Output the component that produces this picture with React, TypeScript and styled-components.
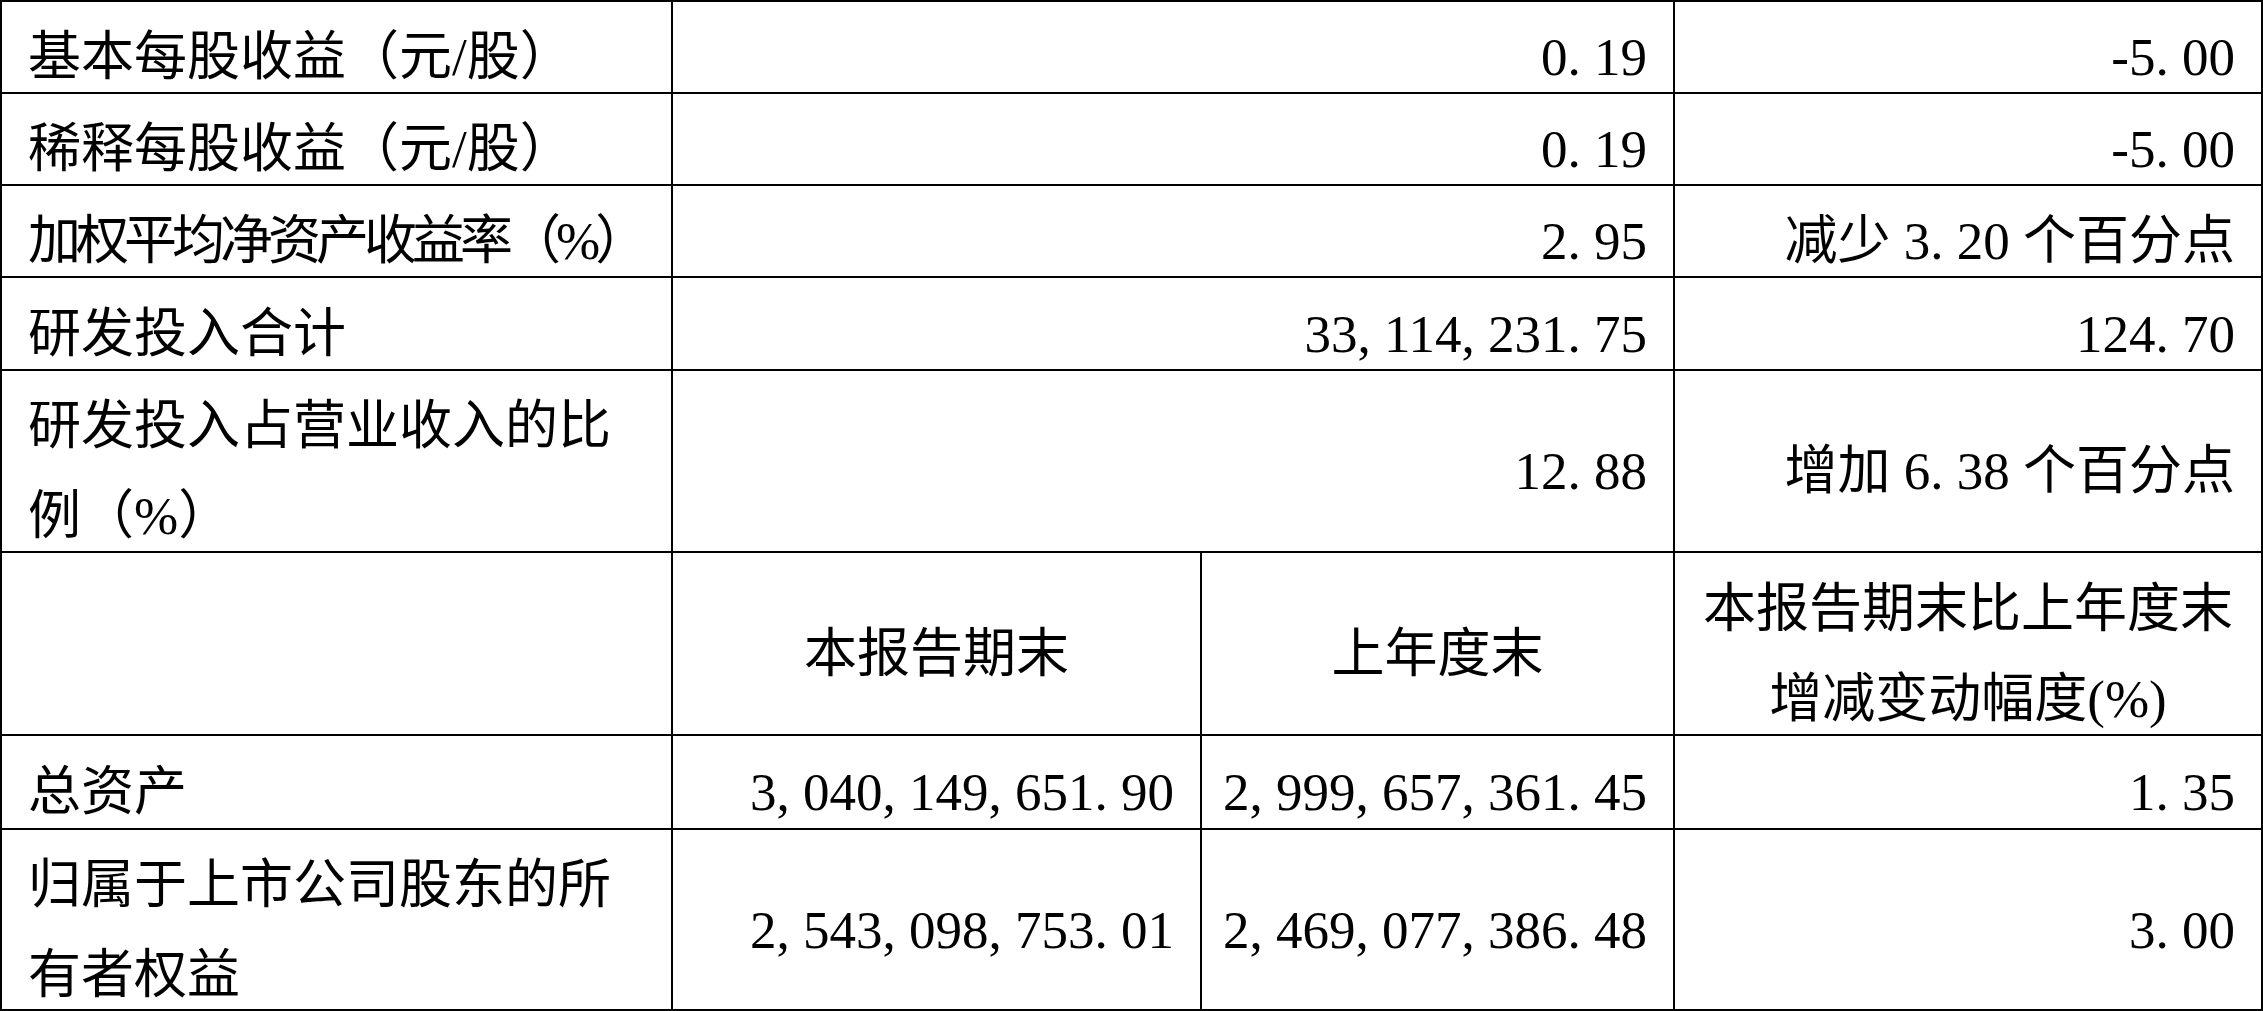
import React from 'react';
import styled, { createGlobalStyle } from 'styled-components';

const GlobalStyle = createGlobalStyle`
  html, body {
    margin: 0;
    padding: 0;
    background: #fff;
  }
  body {
    font-family: "Liberation Serif", "Noto Sans CJK SC", serif;
  }
`;

const Table = styled.div`
  display: grid;
  grid-template-columns: 669px 527px 471px 586px;
  grid-template-rows: 90px 90px 90px 91px 180px 181px 92px 179px;
  gap: 2px;
  padding: 2px;
  width: 2263px;
  box-sizing: border-box;
  background: #000;
  color: #000;
  font-family: "Liberation Serif", "Noto Sans CJK SC", serif;
  font-size: 53px;
  line-height: 90px;
`;

type Align = 'left' | 'center' | 'right';

const justify: Record<Align, string> = {
  left: 'flex-start',
  center: 'center',
  right: 'flex-end',
};

const CellBox = styled.div<{ $align: Align; $span: number; $tight: boolean }>`
  background: #fff;
  display: flex;
  align-items: center;
  justify-content: ${(p) => justify[p.$align]};
  text-align: ${(p) => p.$align};
  grid-column: span ${(p) => p.$span};
  padding: 20px ${(p) => (p.$align === 'center' ? '20px' : '26px')} 0;
  box-sizing: border-box;
  min-width: 0;
  letter-spacing: ${(p) => (p.$tight ? '-5px' : 'normal')};
  white-space: ${(p) => (p.$tight ? 'nowrap' : 'normal')};
`;

const Content = styled.div`
  text-align: inherit;
`;

// half-width punctuation in the source font takes a full digit cell
const Punct = styled.span`
  margin-right: 0.25em;
`;

const num = (s: string) =>
  s.split(/([,.])/).map((part, i) =>
    part === ',' || part === '.' ? <Punct key={i}>{part}</Punct> : part
  );

const Cell = ({
  align = 'left',
  span = 1,
  tight = false,
  children,
}: {
  align?: Align;
  span?: number;
  tight?: boolean;
  children?: React.ReactNode;
}) => (
  <CellBox $align={align} $span={span} $tight={tight}>
    <Content>{children}</Content>
  </CellBox>
);

export default function App() {
  return (
    <>
      <GlobalStyle />
      <Table>
        <Cell>基本每股收益（元/股）</Cell>
        <Cell align="right" span={2}>{num('0.19')}</Cell>
        <Cell align="right">{num('-5.00')}</Cell>

        <Cell>稀释每股收益（元/股）</Cell>
        <Cell align="right" span={2}>{num('0.19')}</Cell>
        <Cell align="right">{num('-5.00')}</Cell>

        <Cell tight>加权平均净资产收益率（%）</Cell>
        <Cell align="right" span={2}>{num('2.95')}</Cell>
        <Cell align="right">
          减少 {num('3.20')} 个百分点
        </Cell>

        <Cell>研发投入合计</Cell>
        <Cell align="right" span={2}>{num('33,114,231.75')}</Cell>
        <Cell align="right">{num('124.70')}</Cell>

        <Cell>研发投入占营业收入的比例（%）</Cell>
        <Cell align="right" span={2}>{num('12.88')}</Cell>
        <Cell align="right">
          增加 {num('6.38')} 个百分点
        </Cell>

        <Cell />
        <Cell align="center">本报告期末</Cell>
        <Cell align="center">上年度末</Cell>
        <Cell align="center">本报告期末比上年度末增减变动幅度(%)</Cell>

        <Cell>总资产</Cell>
        <Cell align="right">{num('3,040,149,651.90')}</Cell>
        <Cell align="right">{num('2,999,657,361.45')}</Cell>
        <Cell align="right">{num('1.35')}</Cell>

        <Cell>归属于上市公司股东的所有者权益</Cell>
        <Cell align="right">{num('2,543,098,753.01')}</Cell>
        <Cell align="right">{num('2,469,077,386.48')}</Cell>
        <Cell align="right">{num('3.00')}</Cell>
      </Table>
    </>
  );
}
